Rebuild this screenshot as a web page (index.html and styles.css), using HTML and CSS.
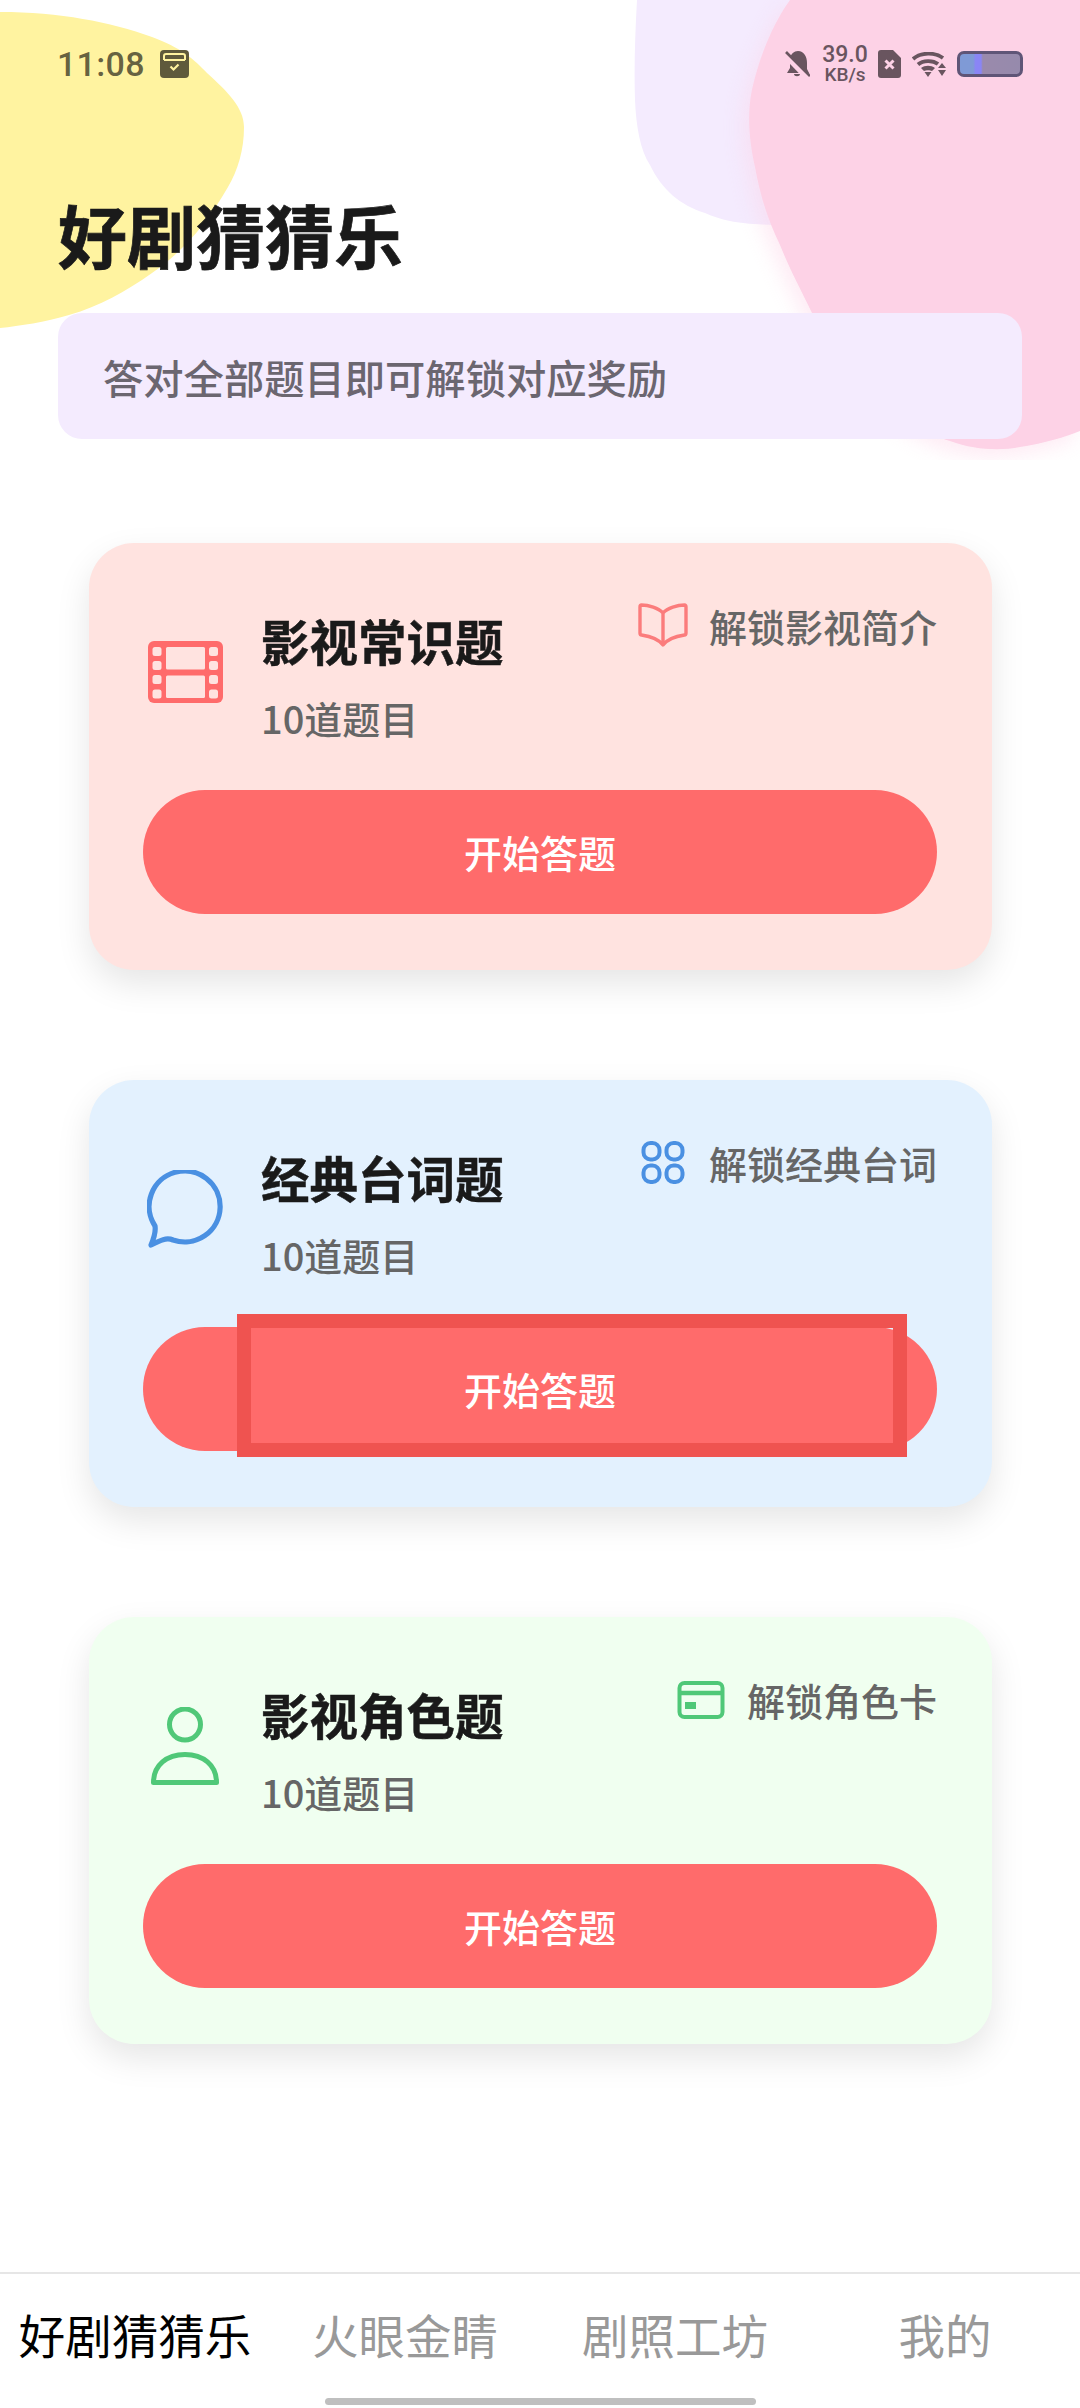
FILE: index.html
```html
<!DOCTYPE html>
<html lang="zh-CN">
<head>
    <meta charset="UTF-8">
    <meta name="viewport" content="width=device-width, initial-scale=1.0">
    <title>好剧猜猜乐</title>
    <link rel="stylesheet" href="styles.css">
</head>

<body>
    <svg class="blobs" viewBox="0 0 1080 460" width="1080" height="460">
        <path class="blob_yellow" d="M0 12 C60 12 110 22 152 37 C180 47 195 60 207 73 C228 92 244 108 244 127 C244 150 238 170 228 187 C208 222 185 250 152 273 C125 292 100 306 69 315 C45 322 20 326 0 328 Z"/>
        <path class="blob_lilac" d="M637 0 C635 35 634 70 635 100 C636 125 640 150 650 165 C662 190 680 205 705 213 C725 222 745 225 790 225 L860 225 L860 0 Z"/>
        <path class="blob_pink" d="M790 0 C772 25 758 60 751 95 C747 120 750 145 755 167 C760 195 768 220 780 245 C790 270 802 292 812 313 C840 370 900 425 950 441 C975 450 1000 451 1020 447 C1045 443 1065 437 1080 431 L1080 0 Z"/>
    </svg>

    <div class="status_bar">
        <div class="status_left">
            <span class="clock">11:08</span>
            <svg class="st_icon" width="29" height="28" viewBox="0 0 29 28">
                <rect width="29" height="28" rx="4" fill="#5f5a3c"/>
                <path d="M4 10 V6 Q4 4 6 4 H23 Q25 4 25 6 V10" fill="none" stroke="#fff3a0" stroke-width="2"/>
                <rect x="4" y="9" width="21" height="2" fill="#fff3a0"/>
                <path d="M10.5 16.5 L13.5 19.5 L18.5 14.5" fill="none" stroke="#fff3a0" stroke-width="2.2"/>
            </svg>
        </div>
        <div class="status_right">
            <svg class="bell" width="25" height="27" viewBox="0 0 25 27">
                <path class="st_fill" d="M13 0 C19 0 22 6 22 12 V18 L24 22 H2 L5 17 V7 C6 3 9 0 13 0 Z M9 23 H15 C15 26 9 26 9 23 Z"/>
                <path d="M-1 3 L22 27" stroke="#fdd2e6" stroke-width="5"/>
                <path d="M1 1 L25 25" class="st_line" stroke-width="2.6"/>
            </svg>
            <div class="speed">
                <span class="speed_num">39.0</span>
                <span class="speed_unit">KB/s</span>
            </div>
            <svg width="23" height="28" viewBox="0 0 23 28">
                <path class="st_fill" d="M3 0 H15 L23 8 V25 Q23 28 20 28 H3 Q0 28 0 25 V3 Q0 0 3 0 Z"/>
                <path d="M7.5 10.5 L15.5 18.5 M15.5 10.5 L7.5 18.5" stroke="#fdd2e6" stroke-width="3"/>
            </svg>
            <svg width="34" height="25" viewBox="0 0 34 25">
                <path class="st_line" fill="none" stroke-width="3.8" d="M1 7 C9 0 23 0 31 6"/>
                <path class="st_line" fill="none" stroke-width="3.8" d="M6 12.5 C11 8 21 8 26 12"/>
                <path class="st_fill" d="M9 16 C13 13 19 13 23 16 L20 19 C18 18 14 18 12 19 Z M12.5 20 H19.5 L16 25 Z"/>
                <path class="st_fill" d="M30 11 L34 16 H26 Z M26 18 H34 L30 24 Z"/>
            </svg>
            <div class="battery"></div>
        </div>
    </div>

    <div class="page_head">
        <h1>好剧猜猜乐</h1>
        <div class="notice">答对全部题目即可解锁对应奖励</div>
    </div>

    <div class="card_list">
        <div class="card card_red">
            <div class="card_head">
                <div class="card_main">
                    <div class="card_icon">
                        <svg width="75" height="62" viewBox="0 0 75 62">
                            <rect width="75" height="62" rx="6" fill="#ff6b6b"/>
                            <g fill="#ffe3e0">
                                <rect x="4.5" y="6" width="9" height="9" rx="2.5"/>
                                <rect x="4.5" y="20" width="9" height="9" rx="2.5"/>
                                <rect x="4.5" y="34" width="9" height="9" rx="2.5"/>
                                <rect x="4.5" y="48.5" width="9" height="9" rx="2.5"/>
                                <rect x="61" y="6" width="9" height="9" rx="2.5"/>
                                <rect x="61" y="20" width="9" height="9" rx="2.5"/>
                                <rect x="61" y="34" width="9" height="9" rx="2.5"/>
                                <rect x="61" y="48.5" width="9" height="9" rx="2.5"/>
                                <rect x="18" y="6" width="39" height="22.5" rx="1.5"/>
                                <rect x="18" y="34.5" width="39" height="22.5" rx="1.5"/>
                            </g>
                        </svg>
                    </div>
                    <div class="card_text">
                        <div class="card_title">影视常识题</div>
                        <div class="card_count">10道题目</div>
                    </div>
                </div>
                <div class="reward">
                    <svg width="50" height="45" viewBox="0 0 49 45" fill="none" stroke="#fb7c7c" stroke-width="3.4" stroke-linejoin="round">
                        <path d="M24.5 10 C20 5 10 2 3 2 Q1.5 2 1.5 4 V30 Q1.5 32 3 32 C10 33 20 36 24.5 42 C29 36 39 33 46 32 Q47.5 32 47.5 30 V4 Q47.5 2 46 2 C39 2 29 5 24.5 10 Z M24.5 10 V42"/>
                    </svg>
                    <span>解锁影视简介</span>
                </div>
            </div>
            <div class="start_btn">开始答题</div>
        </div>

        <div class="card card_blue">
            <div class="card_head">
                <div class="card_main">
                    <div class="card_icon">
                        <svg width="76" height="78" viewBox="0 0 76 78" fill="none" stroke="#4a90e2" stroke-width="5.2" stroke-linejoin="round">
                            <path d="M8 56 A35.5 35.5 0 1 1 26 70 C19 67 12 71 4 75 C7 68 9 62 8 56 Z"/>
                        </svg>
                    </div>
                    <div class="card_text">
                        <div class="card_title">经典台词题</div>
                        <div class="card_count">10道题目</div>
                    </div>
                </div>
                <div class="reward">
                    <svg width="50" height="43" viewBox="0 0 50 43" fill="none" stroke="#4a90e2" stroke-width="4">
                        <rect x="5.5" y="2" width="16" height="16.5" rx="7"/>
                        <rect x="28.5" y="2" width="16" height="16.5" rx="7"/>
                        <rect x="5.5" y="24.5" width="16" height="16.5" rx="7"/>
                        <rect x="28.5" y="24.5" width="16" height="16.5" rx="7"/>
                    </svg>
                    <span>解锁经典台词</span>
                </div>
            </div>
            <div class="start_btn">
                开始答题
                <div class="focus_box"></div>
            </div>
        </div>

        <div class="card card_green">
            <div class="card_head">
                <div class="card_main">
                    <div class="card_icon">
                        <svg width="70" height="78" viewBox="0 0 70 78" fill="none" stroke="#50c878" stroke-width="5" stroke-linejoin="round">
                            <ellipse cx="35" cy="17.5" rx="15.5" ry="15.5"/>
                            <path d="M3.5 75.5 C3.5 58 17 47.5 35 47.5 C53 47.5 66.5 58 66.5 75.5 Z"/>
                        </svg>
                    </div>
                    <div class="card_text">
                        <div class="card_title">影视角色题</div>
                        <div class="card_count">10道题目</div>
                    </div>
                </div>
                <div class="reward">
                    <svg width="50" height="38" viewBox="0 0 50 38" fill="none" stroke="#50c878" stroke-width="4">
                        <rect x="3.5" y="2" width="43" height="34" rx="5"/>
                        <path d="M3.5 12 H46.5" stroke-width="4.5"/>
                        <rect x="9" y="21" width="11" height="7" fill="#50c878" stroke="none"/>
                    </svg>
                    <span>解锁角色卡</span>
                </div>
            </div>
            <div class="start_btn">开始答题</div>
        </div>
    </div>

    <div class="tab_bar">
        <div class="tabs">
            <div class="tab active">好剧猜猜乐</div>
            <div class="tab">火眼金睛</div>
            <div class="tab">剧照工坊</div>
            <div class="tab">我的</div>
        </div>
        <div class="home_line"></div>
    </div>
</body>
</html>
```

FILE: styles.css
```css
*{
    box-sizing: border-box;
}

body{
    margin: 0;
    width: 1080px;
    height: 2408px;
    position: relative;
    overflow: hidden;
    background-color: #fff;
    display: flex;
    flex-direction: column;
    font-family: "Noto Sans CJK SC", "Noto Sans", sans-serif;
    color: #666;
}

.blobs{
    position: absolute;
    top: 0;
    left: 0;
}

.blob_yellow{
    fill: #fff3a0;
}

.blob_lilac{
    fill: #f4ebfe;
}

.blob_pink{
    fill: #fdd2e6;
    filter: drop-shadow(-6px 8px 10px rgba(253, 210, 230, 0.45));
}

/* status bar */
.status_bar{
    position: relative;
    height: 128px;
    padding: 0 57px;
    display: flex;
    align-items: center;
    justify-content: space-between;
    color: rgba(0, 0, 0, 0.62);
}

.status_left{
    display: flex;
    align-items: center;
    gap: 15px;
}

.clock{
    font-family: Roboto, sans-serif;
    font-size: 34px;
    letter-spacing: 0.3px;
    font-weight: 500;
}

.status_right{
    display: flex;
    align-items: center;
    gap: 11px;
}

.bell{
    margin-right: 2px;
}

.st_fill{
    fill: #69555f;
}

.st_line{
    stroke: #69555f;
}

.speed{
    display: flex;
    flex-direction: column;
    align-items: center;
    font-family: Roboto, sans-serif;
    font-weight: 500;
    color: #69555f;
    width: 44px;
}

.speed_num{
    font-size: 23px;
    line-height: 21px;
}

.speed_unit{
    font-size: 19px;
    line-height: 19px;
}

.battery{
    width: 66px;
    height: 26px;
    border: 3px solid #5f5577;
    border-radius: 7px;
    background: linear-gradient(90deg, #7f9ad6 0, #7f9ad6 22%, #8a85f5 26%, #8a85f5 35%, #9a8aac 38%, #968aac 100%);
}

/* page heading */
.page_head{
    position: relative;
    padding: 0 58px;
}

.page_head h1{
    margin: 72px 0 0;
    font-size: 69px;
    line-height: 68px;
    font-weight: 700;
    color: #1a1a1a;
    -webkit-text-stroke: 0.7px #1a1a1a;
}

.notice{
    margin-top: 45px;
    height: 126px;
    padding-left: 45px;
    display: flex;
    align-items: center;
    background-color: #f4ebfe;
    border-radius: 24px;
    font-size: 40.3px;
    font-weight: 500;
    color: #6b6670;
}

/* cards */
.card_list{
    position: relative;
    margin-top: 104px;
    padding: 0 88px 0 89px;
    display: flex;
    flex-direction: column;
    gap: 110px;
}

.card{
    height: 427px;
    padding: 54px 55px 56px 54px;
    border-radius: 45px;
    box-shadow: 0 14px 34px rgba(0, 0, 0, 0.1);
}

.card_red{
    background-color: #ffe3e0;
}

.card_blue{
    background-color: #e3f1fe;
}

.card_green{
    background-color: #f0fff0;
}

.card_head{
    height: 149px;
    display: flex;
    justify-content: space-between;
    align-items: flex-start;
}

.card_main{
    height: 100%;
    display: flex;
    align-items: center;
    gap: 34px;
}

.card_icon{
    width: 84px;
    display: flex;
    justify-content: center;
}

.card_text{
    padding-top: 7px;
}

.card_title{
    font-size: 48.5px;
    line-height: 68px;
    font-weight: 700;
    color: #1a1a1a;
    -webkit-text-stroke: 0.5px #1a1a1a;
}

.card_count{
    margin-top: 18px;
    font-size: 38px;
    line-height: 52px;
    font-weight: 500;
    color: #666;
}

.reward{
    margin-top: 4px;
    height: 50px;
    display: flex;
    align-items: center;
    gap: 21px;
    font-size: 38px;
    line-height: 50px;
    font-weight: 500;
    color: #666;
}

.reward svg{
    margin-bottom: 1px;
}

.start_btn{
    position: relative;
    margin-top: 44px;
    height: 124px;
    padding-bottom: 2px;
    display: flex;
    align-items: center;
    justify-content: center;
    background-color: #ff6b6b;
    border-radius: 62px;
    font-size: 38px;
    font-weight: 500;
    color: #fff;
}

.focus_box{
    position: absolute;
    top: -13px;
    left: 94px;
    right: 30px;
    bottom: -6px;
    border: 14px solid #ef5350;
}

/* bottom tabs */
.tab_bar{
    margin-top: auto;
    border-top: 2px solid #e6e6e6;
    background-color: #fff;
}

.tabs{
    height: 124px;
    padding-bottom: 5px;
    display: flex;
}

.tab{
    flex: 1;
    display: flex;
    align-items: center;
    justify-content: center;
    font-size: 46.5px;
    color: #999;
}

.tab.active{
    color: #000;
}

.home_line{
    width: 431px;
    height: 7px;
    margin: 0 auto 3px;
    background-color: #bfbfbf;
    border-radius: 4px;
}
```
